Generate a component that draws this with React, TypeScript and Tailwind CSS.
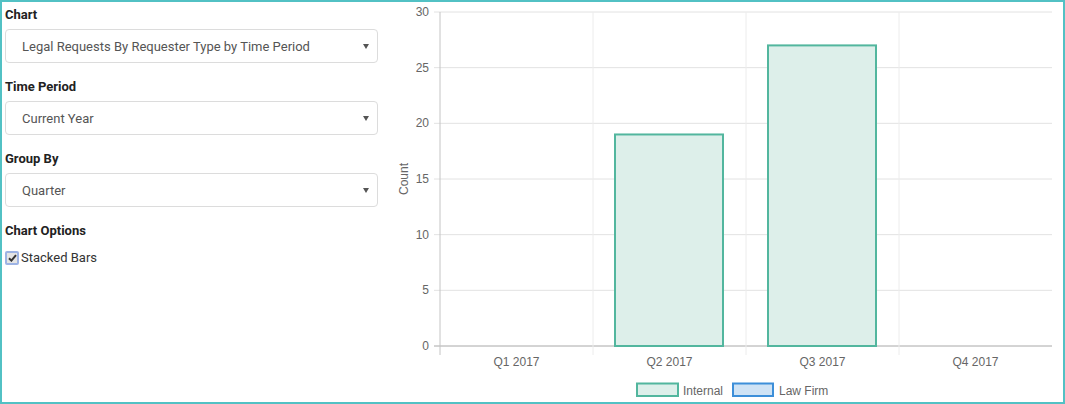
import React from 'react';

const labelFont = { fontFamily: 'Roboto, "Liberation Sans", sans-serif' };

const SelectBox = ({ value }: { value: string }) => {
    return (
        <div className="h-[34px] w-[373px] border border-[#dcdcdc] rounded-[4px] bg-white flex items-center justify-between pl-[16px] pr-[7px]">
            <span className="text-[13px] text-[#555] pt-[2px]">{value}</span>
            <svg width="6" height="5" viewBox="0 0 6 5" className="mr-[1px]">
                <path d="M0 0 L6 0 L3 5 Z" fill="#555" />
            </svg>
        </div>
    );
};

const Field = ({ label, value }: { label: string; value: string }) => {
    return (
        <div className="mb-[15px]">
            <div className="text-[13px] leading-[18px] font-bold text-[#222] mb-[5px]">{label}</div>
            <SelectBox value={value} />
        </div>
    );
};

const ySteps = [0, 5, 10, 15, 20, 25, 30];
const quarters = ['Q1 2017', 'Q2 2017', 'Q3 2017', 'Q4 2017'];
const counts = [0, 19, 27, 0];

// plot area in page coordinates
const left = 440;
const right = 1052;
const top = 12;
const bottom = 346;
const yOf = (v: number) => bottom - (v / 30) * (bottom - top);
const colW = (right - left) / 4;

const Chart = () => {
    return (
        <svg
            width="678"
            height="400"
            viewBox="385 2 678 400"
            style={{ fontFamily: '"Liberation Sans", Arial, sans-serif' }}
        >
            {ySteps.map((s) => (
                <g key={s}>
                    <line
                        x1={434}
                        x2={right}
                        y1={yOf(s)}
                        y2={yOf(s)}
                        stroke={s === 0 ? '#a8a8a8' : '#e2e2e2'}
                        strokeWidth="1"
                    />
                    <text x={429} y={yOf(s) + 4} textAnchor="end" fontSize="12" fill="#666">
                        {s}
                    </text>
                </g>
            ))}
            {[1, 2, 3].map((i) => (
                <line
                    key={i}
                    x1={left + colW * i}
                    x2={left + colW * i}
                    y1={top}
                    y2={355}
                    stroke="#ececec"
                    strokeWidth="1"
                />
            ))}
            <line x1={left} x2={left} y1={top} y2={355} stroke="#c4c4c4" strokeWidth="1" />

            {counts.map((c, i) =>
                c > 0 ? (
                    <rect
                        key={i}
                        x={left + colW * i + 22}
                        y={yOf(c)}
                        width={108}
                        height={bottom - yOf(c)}
                        fill="#ddefea"
                        stroke="#52b69e"
                        strokeWidth="2"
                    />
                ) : null
            )}

            {quarters.map((q, i) => (
                <text key={q} x={left + colW * i + colW / 2} y={366} textAnchor="middle" fontSize="12" fill="#666">
                    {q}
                </text>
            ))}

            <text x={0} y={0} fontSize="12" fill="#666" textAnchor="middle" transform="translate(408 179) rotate(-90)">
                Count
            </text>

            {/* legend */}
            <rect x={637} y={383.5} width={41} height={12.5} fill="#ddefea" stroke="#52b69e" strokeWidth="2" />
            <text x={683} y={394.5} fontSize="12" fill="#666">Internal</text>
            <rect x={733} y={383.5} width={40} height={12.5} fill="#cfe3f5" stroke="#3d8fd9" strokeWidth="2" />
            <text x={779} y={394.5} fontSize="12" fill="#666">Law Firm</text>
        </svg>
    );
};

const App = () => {
    return (
        <div className="w-[1065px] h-[404px] border-2 border-[#52c1c4] bg-white flex" style={labelFont}>
            <div className="w-[383px] pl-[3px] pt-[4px]">
                <Field label="Chart" value="Legal Requests By Requester Type by Time Period" />
                <Field label="Time Period" value="Current Year" />
                <Field label="Group By" value="Quarter" />
                <div className="text-[13px] leading-[18px] font-bold text-[#222] mt-[1px] mb-[8px]">Chart Options</div>
                <label className="flex items-center">
                    <span className="w-[14px] h-[14px] border-2 border-[#9db3e4] bg-[#e4e4e4] rounded-[2px] flex items-center justify-center">
                        <svg width="9" height="8" viewBox="0 0 9 8">
                            <path d="M1 4.2 L3.4 6.6 L8 1.2" stroke="#333" strokeWidth="2" fill="none" />
                        </svg>
                    </span>
                    <span className="ml-[2px] text-[13px] text-[#333]">Stacked Bars</span>
                </label>
            </div>
            <Chart />
        </div>
    );
};

export default App;
